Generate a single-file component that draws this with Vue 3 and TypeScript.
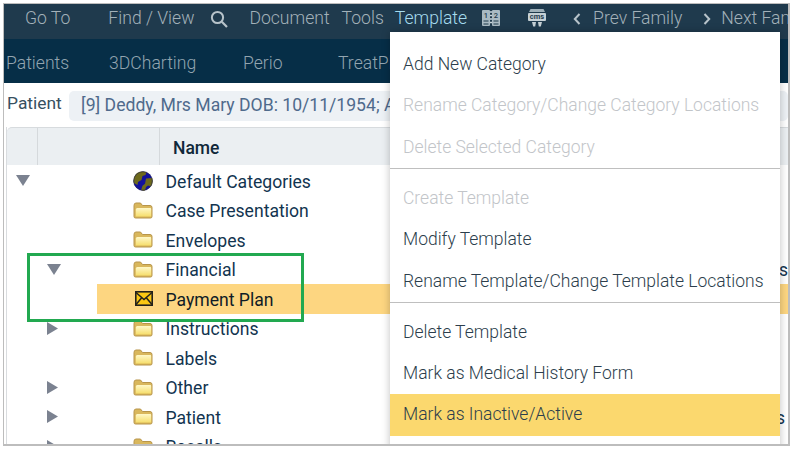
<script setup lang="ts">
type Row = { name: string; icon: 'globe' | 'folder' | 'mail'; arrow?: 'down' | 'right'; depth: number; note?: string; selected?: boolean }
type Item = { label: string; off?: boolean; active?: boolean; line?: boolean }

const mainTabs = ['Patients', '3DCharting', 'Perio', 'TreatPlan']

const rows: Row[] = [
  { name: 'Default Categories', icon: 'globe', arrow: 'down', depth: 0 },
  { name: 'Case Presentation', icon: 'folder', depth: 1 },
  { name: 'Envelopes', icon: 'folder', depth: 1 },
  { name: 'Financial', icon: 'folder', arrow: 'down', depth: 1, note: 'Templates' },
  { name: 'Payment Plan', icon: 'mail', depth: 1, selected: true },
  { name: 'Instructions', icon: 'folder', arrow: 'right', depth: 1 },
  { name: 'Labels', icon: 'folder', depth: 1 },
  { name: 'Other', icon: 'folder', arrow: 'right', depth: 1 },
  { name: 'Patient', icon: 'folder', arrow: 'right', depth: 1, note: 'Forms' },
  { name: 'Recalls', icon: 'folder', arrow: 'right', depth: 1 },
]

const menu: Item[] = [
  { label: 'Add New Category' },
  { label: 'Rename Category/Change Category Locations', off: true },
  { label: 'Delete Selected Category', off: true, line: true },
  { label: 'Create Template', off: true },
  { label: 'Modify Template' },
  { label: 'Rename Template/Change Template Locations', line: true },
  { label: 'Delete Template' },
  { label: 'Mark as Medical History Form' },
  { label: 'Mark as Inactive/Active', active: true },
]
</script>

<template>
  <div class="frame">
    <header class="topbar">
      <span class="nav go">Go To</span>
      <span class="nav find">Find / View</span>
      <svg class="search" viewBox="0 0 20 20" width="20" height="20">
        <circle cx="8.500" cy="8.500" r="5.600" fill="none" stroke="#b7c3ca" stroke-width="2" />
        <path d="M12.800 12.800 18 18" stroke="#b7c3ca" stroke-width="2.200" fill="none" />
      </svg>
      <span class="nav doc">Document</span>
      <span class="nav tools">Tools</span>
      <span class="nav tpl">Template</span>
      <svg class="book" viewBox="0 0 20 20" width="20" height="20">
        <rect x="1" y="2" width="8" height="16" rx="1" fill="#a9bac3" />
        <rect x="11" y="2" width="8" height="16" rx="1" fill="#a9bac3" />
        <path d="M9 4h2M9 7.500h2M9 11h2M9 14.500h2" stroke="#c9d5db" stroke-width="1.500" />
        <path d="M2.500 13h5M2.500 16h5M12.500 13h5M12.500 16h5" stroke="#1f3a4d" stroke-width="1.100" />
        <text x="5" y="10" class="glyph">1</text>
        <text x="15" y="10" class="glyph">2</text>
      </svg>
      <svg class="cms" viewBox="0 0 20 20" width="20" height="20">
        <path d="M3.500 1h13l1.500 3H2z" fill="#9fb0b9" />
        <rect x="1" y="5" width="18" height="8" rx="1" fill="#c6d0d5" />
        <text x="10" y="11.300" class="cms-text">cms</text>
        <path d="M5 14h4l-.8 4.500H6.200zM11 14h4l-1.200 4.500h-2z" fill="#c6d0d5" />
      </svg>
      <svg class="chev prev" viewBox="0 0 10 14" width="10" height="14"><path d="M7.500 2 2.800 7l4.700 5" fill="none" stroke="#b7c3ca" stroke-width="2" /></svg>
      <span class="nav pf">Prev Family</span>
      <svg class="chev next" viewBox="0 0 10 14" width="10" height="14"><path d="M2.500 2 7.200 7l-4.700 5" fill="none" stroke="#b7c3ca" stroke-width="2" /></svg>
      <span class="nav nf">Next Family</span>
    </header>

    <nav class="tabbar">
      <span v-for="t in mainTabs" :key="t" class="tab">{{ t }}</span>
    </nav>

    <div class="patient">
      <label class="plabel">Patient</label>
      <div class="pfield">[9] Deddy, Mrs Mary DOB: 10/11/1954; Age: 66</div>
    </div>

    <div class="table">
      <div class="thead">
        <div class="th c1"></div>
        <div class="th c2"></div>
        <div class="th c3">Name</div>
      </div>
      <div class="tbody">
        <div v-for="r in rows" :key="r.name" class="row">
          <div class="arrow-cell" :class="{ deep: r.depth > 0 }">
            <svg v-if="r.arrow === 'down'" viewBox="0 0 14 11" width="14" height="11"><path d="M0 0h14L7 11z" fill="#7b8290" /></svg>
            <svg v-else-if="r.arrow === 'right'" viewBox="0 0 11 13" width="11" height="13"><path d="M0 0l11 6.500L0 13z" fill="#7b8290" /></svg>
          </div>
          <div class="main-cell" :class="{ selected: r.selected }">
            <svg v-if="r.icon === 'globe'" class="ico" viewBox="0 0 20 20" width="20" height="20">
              <circle cx="10" cy="10" r="9.500" fill="#12129e" />
              <path d="M4.500 1.800C7.500 .2 11 .2 13.500 1L12.500 4 9.500 5 8.500 9 5 11 4.500 14 .8 12C0 8 1.500 3.800 4.500 1.800z" fill="#6e6a1c" />
              <path d="M13 7.500 19.300 7c.8 3 .3 6-1.300 8.500l-3-1-2 1.500-1 3.500c-1.500.4-2.500.3-4-.2l1.500-4.500 2.500-2z" fill="#6e6a1c" />
              <circle cx="10" cy="10" r="9.300" fill="none" stroke="#23234a" stroke-width=".6" />
            </svg>
            <svg v-else-if="r.icon === 'folder'" class="ico" viewBox="0 0 20 17" width="20" height="17">
              <defs>
                <linearGradient id="fold" x1="0" y1="0" x2="0" y2="1">
                  <stop offset="0" stop-color="#fff8c8" />
                  <stop offset="1" stop-color="#f6de6c" />
                </linearGradient>
              </defs>
              <path d="M1 14.500V3.500Q1 1 3 1h4.500l2 2.500h7.500Q19 3.500 19 5.500v9q0 1.500-1.500 1.500h-15Q1 16 1 14.500z" fill="#d9b75c" stroke="#b8954a" />
              <path d="M2.800 14.500V7.500Q2.800 6 4.300 6h13q.9 0 .9 1v7.500z" fill="url(#fold)" />
            </svg>
            <svg v-else class="ico mail" viewBox="0 0 18 15" width="18" height="15">
              <rect x=".8" y=".8" width="16.400" height="13.400" fill="#fbc712" stroke="#23211c" stroke-width="1.600" />
              <path d="M1 1.500 9 8.500l8-7M1 13.500l5.500-6.500M17 13.500 11.500 7" fill="none" stroke="#23211c" stroke-width="1.500" />
            </svg>
            <span class="name">{{ r.name }}</span>
            <span v-if="r.note" class="note" :class="{ inset: r.name === 'Patient' }">{{ r.note }}</span>
          </div>
        </div>
      </div>
    </div>

    <div class="callout"></div>

    <ul class="menu">
      <li
        v-for="m in menu"
        :key="m.label"
        class="menu-item"
        :class="{ off: m.off, active: m.active, line: m.line }"
      >{{ m.label }}</li>
    </ul>
  </div>
</template>

<style scoped>
.frame {
  position: relative;
  box-sizing: border-box;
  width: 787px;
  height: 443px;
  margin: 3px 0 0 3px;
  border: 1px solid #bdbdbd;
  border-width: 1px 2px 2px 1px;
  overflow: hidden;
  background: #fff;
  font-family: Roboto, "Liberation Sans", sans-serif;
}
.topbar {
  display: flex;
  align-items: center;
  box-sizing: border-box;
  height: 35px;
  padding-bottom: 8px;
  background: #1f3a4d;
  white-space: nowrap;
}
.topbar > * { flex: none; }
.nav {
  font-size: 17.600px;
  font-weight: 300;
  color: #a3b1b9;
}
.go { margin-left: 21px; }
.find { margin-left: 38px; }
.search { margin-left: 15px; margin-top: 3px; }
.doc { margin-left: 20px; }
.tools { margin-left: 12px; }
.tpl { margin-left: 11px; color: #a6dcee; }
.book { margin-left: 14px; }
.cms { margin-left: 26px; }
.prev { margin-left: 25px; margin-top: 3px; }
.pf { margin-left: 11px; }
.next { margin-left: 20px; margin-top: 3px; }
.nf { margin-left: 9px; }
.glyph {
  font-size: 7.500px;
  font-weight: 500;
  fill: #1f3a4d;
  text-anchor: middle;
}
.cms-text {
  font-size: 7.500px;
  font-weight: 700;
  fill: #1f3a4d;
  text-anchor: middle;
}

.tabbar {
  display: flex;
  align-items: center;
  box-sizing: border-box;
  height: 44px;
  padding: 4px 0 0 2px;
  background: #062e47;
  white-space: nowrap;
}
.tab {
  flex: none;
  width: 103px;
  font-size: 17.600px;
  font-weight: 300;
  color: #92a5b0;
}
.tab:nth-child(2) { width: 134px; }
.tab:nth-child(3) { width: 95px; }

.patient {
  display: flex;
  align-items: center;
  height: 44px;
  padding: 0 0 0 3px;
}
.plabel {
  width: 62px;
  margin-top: -4px;
  font-size: 17.400px;
  color: #37505f;
}
.pfield {
  flex: 1;
  height: 30px;
  margin-top: 2px;
  padding-left: 12px;
  line-height: 29px;
  background: #edf1f5;
  border-radius: 5px;
  font-size: 17.600px;
  color: #4f6a8c;
  white-space: nowrap;
}

.table {
  margin-left: 2px;
  border-left: 1px solid #d9dcdf;
}
.thead {
  display: flex;
  height: 38px;
  background: #ebeff2;
  border-top: 1px solid #d7dbde;
  border-radius: 5px 0 0 0;
  box-sizing: border-box;
}
.th {
  box-sizing: border-box;
  border-right: 1px solid #d5d9dc;
}
.c1 { width: 31px; }
.c2 { width: 122px; }
.c3 {
  flex: 1;
  border-right: 0;
  padding-left: 13px;
  line-height: 41px;
  font-size: 17.500px;
  font-weight: 500;
  color: #10283a;
}
.tbody {
  padding-top: 1px;
}
.row {
  display: flex;
  height: 29.500px;
}
.arrow-cell {
  display: flex;
  align-items: center;
  width: 90px;
  padding-left: 9px;
  box-sizing: border-box;
}
.arrow-cell.deep { padding-left: 40px; }
.main-cell {
  flex: 1;
  display: flex;
  align-items: center;
  padding-left: 36px;
  position: relative;
}
.main-cell.selected { background: #fdd681; }
.ico {
  flex: none;
  width: 20px;
}
.mail { margin-left: 2px; width: 18px; }
.name {
  margin: 2px 0 0 12.500px;
  font-size: 17.600px;
  color: #12344f;
}
.mail + .name { color: #101c26; }
.note {
  margin: 2px 0 0 auto;
  font-size: 17.500px;
  color: #12344f;
}
.note.inset { margin-right: 3px; }
.callout {
  position: absolute;
  left: 23px;
  top: 249px;
  width: 277px;
  height: 69px;
  box-sizing: border-box;
  border: 3px solid #22a950;
}
.menu {
  position: absolute;
  left: 386px;
  top: 28px;
  width: 390px;
  height: 420px;
  margin: 0;
  padding: 12px 0 0;
  box-sizing: border-box;
  list-style: none;
  background: #fff;
  box-shadow: 0 0 8px rgba(0, 0, 0, .25);
}
.menu-item {
  height: 41.400px;
  padding-left: 13px;
  box-sizing: border-box;
  line-height: 41px;
  font-size: 17.500px;
  font-weight: 300;
  color: #2c3e4c;
}
.menu-item.off { color: #c2c5c9; }
.menu-item.active { background: #fbd86e; }
.menu-item.line {
  height: 42px;
  border-bottom: 1px solid #bfbfbf;
  margin-bottom: 9px;
}
</style>

<style>
html, body { background: #fff; }
</style>
